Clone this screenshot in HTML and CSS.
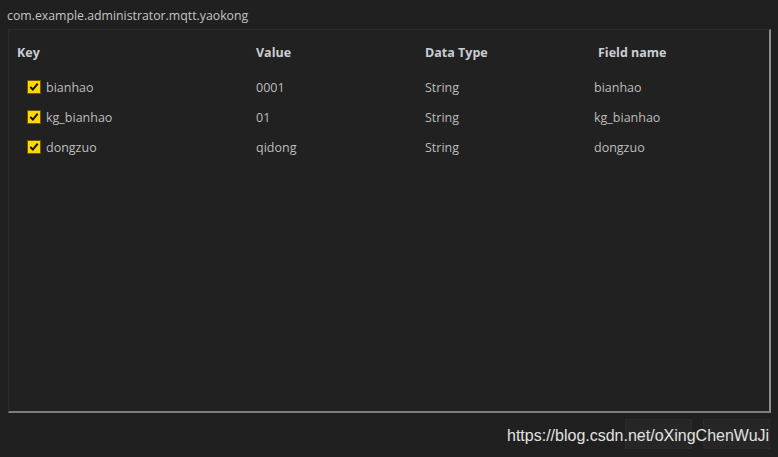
FILE: index.html
```html
<!DOCTYPE html>
<html>
<head>
<meta charset="utf-8">
<link rel="stylesheet" href="styles.css">
</head>
<body>
<div class="dialog">
  <div class="title">com.example.administrator.mqtt.yaokong</div>
  <div class="panel">
    <div class="grid head">
      <div class="h">Key</div>
      <div class="h">Value</div>
      <div class="h">Data Type</div>
      <div class="h field">Field name</div>
    </div>
    <div class="grid row">
      <div class="key"><span class="cb"><svg viewBox="0 0 13 13"><path d="M2.5 6.5 L5.3 9.3 L10.5 2.8" /></svg></span>bianhao</div>
      <div>0001</div>
      <div>String</div>
      <div>bianhao</div>
    </div>
    <div class="grid row">
      <div class="key"><span class="cb"><svg viewBox="0 0 13 13"><path d="M2.5 6.5 L5.3 9.3 L10.5 2.8" /></svg></span>kg_bianhao</div>
      <div>01</div>
      <div>String</div>
      <div>kg_bianhao</div>
    </div>
    <div class="grid row">
      <div class="key"><span class="cb"><svg viewBox="0 0 13 13"><path d="M2.5 6.5 L5.3 9.3 L10.5 2.8" /></svg></span>dongzuo</div>
      <div>qidong</div>
      <div>String</div>
      <div>dongzuo</div>
    </div>
  </div>
  <div class="footer">
    <button class="btn">Cancel</button>
    <button class="btn">OK</button>
  </div>
  <div class="watermark">https://blog.csdn.net/oXingChenWuJi</div>
</div>
</body>
</html>
```
FILE: styles.css
```css
html, body {
  margin: 0;
  padding: 0;
  background: #202020;
}
.dialog {
  position: relative;
  width: 778px;
  height: 457px;
  font-family: "Open Sans", "Noto Sans", sans-serif;
  font-size: 12.5px;
  color: #bdbdbd;
}
.title {
  height: 29px;
  line-height: 32px;
  padding-left: 7px;
  color: #c4c4c4;
  font-size: 12.3px;
}
.panel {
  margin-left: 8px;
  width: 763px;
  height: 384px;
  background: #212121;
  border-top: 1px solid #2c2c2c;
  border-left: 1px solid #2c2c2c;
  border-right: 2px solid #8c8c8c;
  border-bottom: 2px solid #7d7d7d;
  padding-top: 7px;
  box-sizing: border-box;
}
.grid {
  display: grid;
  grid-template-columns: 239px 169px 169px 1fr;
  padding-left: 8px;
  align-items: center;
}
.head {
  height: 30px;
  margin-bottom: 5px;
}
.h {
  font-weight: 700;
  color: #c9ced3;
}
.field {
  padding-left: 4px;
}
.row {
  height: 30px;
}
.key {
  display: flex;
  align-items: center;
  padding-left: 10px;
}
.cb {
  width: 14px;
  height: 14px;
  background: #ffd800;
  box-sizing: border-box;
  border: 1px solid #6b5800;
  margin-right: 5px;
  display: inline-flex;
  align-items: center;
  justify-content: center;
}
.cb svg {
  width: 12px;
  height: 12px;
}
.cb path {
  fill: none;
  stroke: #141414;
  stroke-width: 2.2;
}
.footer {
  display: flex;
  justify-content: flex-end;
  gap: 11px;
  padding-top: 6px;
  padding-right: 8px;
}
.btn {
  width: 67px;
  height: 30px;
  background: #262626;
  border: 1px solid #2b2b2b;
  color: #3a3a3a;
  font-family: "Open Sans", sans-serif;
  font-size: 13px;
  padding: 0;
}
.watermark {
  position: absolute;
  left: 507px;
  top: 427px;
  font-family: "Liberation Sans", Arial, sans-serif;
  font-size: 16px;
  color: #e2e2e2;
}
```
